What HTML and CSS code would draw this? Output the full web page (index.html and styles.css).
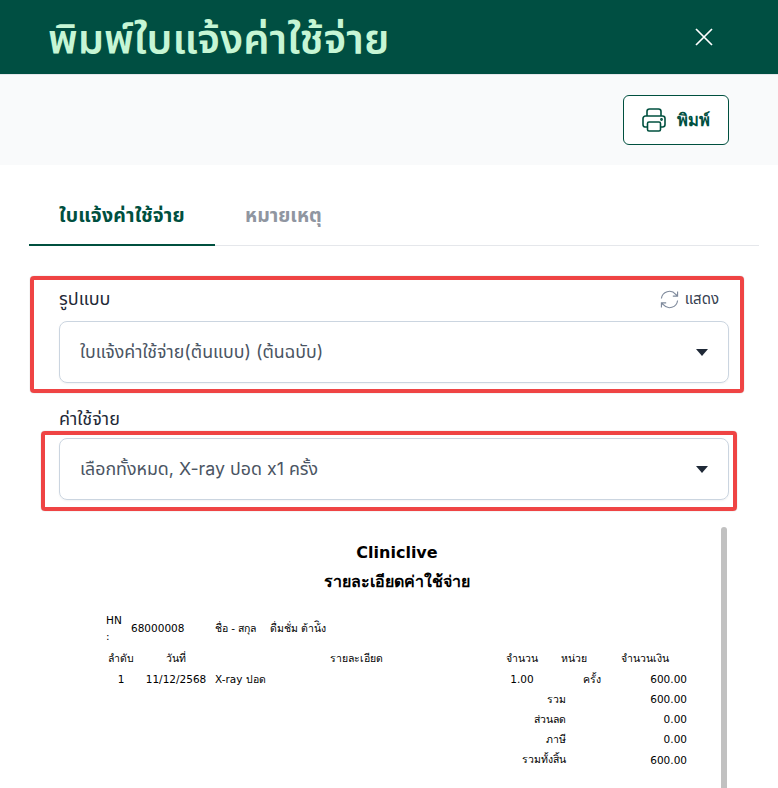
FILE: index.html
```html
<!DOCTYPE html>
<html lang="th">
<head>
<meta charset="utf-8">
<title>พิมพ์ใบแจ้งค่าใช้จ่าย</title>
<link rel="stylesheet" href="styles.css">
</head>
<body>
<header class="header">
  <h1 class="title">พิมพ์ใบแจ้งค่าใช้จ่าย</h1>
  <button class="close" aria-label="close">
    <svg width="20" height="20" viewBox="0 0 20 20"><path d="M2 2L18 18M18 2L2 18" stroke="#fff" stroke-width="1.7" fill="none"/></svg>
  </button>
</header>
<div class="toolbar">
  <button class="print">
    <svg width="26" height="26" viewBox="0 0 26 26" fill="none" stroke="#00503f" stroke-width="1.6"><path d="M6 9V4.500A2.500 2.500 0 0 1 8.500 2h9A2.500 2.500 0 0 1 20 4.500V9"/><path d="M6.500 20H4a2.500 2.500 0 0 1-2-2.500v-6A2.500 2.500 0 0 1 4.500 9h17A2.500 2.500 0 0 1 24 11.500v6a2.500 2.500 0 0 1-2.500 2.500H19.500"/><rect x="6.500" y="15" width="13" height="9" rx="1.500"/><circle cx="20.500" cy="12.500" r=".6"/></svg>
    <span>พิมพ์</span>
  </button>
</div>
<main class="content">
  <nav class="tabs">
    <div class="tab active">ใบแจ้งค่าใช้จ่าย</div>
    <div class="tab">หมายเหตุ</div>
  </nav>
  <section class="field first">
    <div class="label-row">
      <label class="label">รูปแบบ</label>
      <span class="show">
        <svg width="19" height="19" viewBox="0 0 20 20" fill="none" stroke="#7f8a9c" stroke-width="1.200"><path d="M1.500 9A8.500 8.500 0 0 1 16.500 4.500L18.500 6.500M18.500 1.500V6.500H13.500"/><path d="M18.500 11A8.500 8.500 0 0 1 3.500 15.500L1.500 13.500M1.500 18.500V13.500H6.500"/></svg>
        แสดง
      </span>
    </div>
    <div class="select"><span>ใบแจ้งค่าใช้จ่าย(ต้นแบบ) (ต้นฉบับ)</span><i class="caret"></i></div>
  </section>
  <section class="field second">
    <label class="label">ค่าใช้จ่าย</label>
    <div class="select"><span>เลือกทั้งหมด, X-ray ปอด x1 ครั้ง</span><i class="caret"></i></div>
  </section>
  <div class="report">
    <div class="doc">
      <div class="clinic">Cliniclive</div>
      <div class="doc-title">รายละเอียดค่าใช้จ่าย</div>
      <div class="patient">
        <span class="hn">HN :</span>
        <span class="hn-val">68000008</span>
        <span class="name-l">ชื่อ - สกุล</span>
        <span>ดื่มชั่ม ต้าน้ิง</span>
      </div>
      <table class="items">
        <colgroup><col class="c1"><col class="c2"><col class="c3"><col class="c4"><col class="c5"><col class="c6"></colgroup>
        <tr class="head"><th>ลำดับ</th><th>วันที่</th><th>รายละเอียด</th><th>จำนวน</th><th>หน่วย</th><th>จำนวนเงิน</th></tr>
        <tr><td class="ctr">1</td><td class="ctr">11/12/2568</td><td>X-ray ปอด</td><td class="ctr">1.00</td><td class="rt">ครั้ง</td><td class="rt">600.00</td></tr>
        <tr><td colspan="5" class="sum">รวม</td><td class="rt">600.00</td></tr>
        <tr><td colspan="5" class="sum">ส่วนลด</td><td class="rt">0.00</td></tr>
        <tr><td colspan="5" class="sum">ภาษี</td><td class="rt">0.00</td></tr>
        <tr class="grand"><td colspan="5" class="sum">รวมทั้งสิ้น</td><td class="rt">600.00</td></tr>
      </table>
    </div>
    <div class="scrollbar"></div>
  </div>
  <div class="annot a1"></div>
  <div class="annot a2"></div>
</main>
</body>
</html>
```
FILE: styles.css
```css
* { box-sizing: border-box; }
html, body { margin: 0; height: 788px; overflow: hidden; background: #fff; }
body { font-family: Inter, "Noto Sans Thai", "Noto Sans", "Liberation Sans", sans-serif; color: #1f2937; position: relative; }
.header { height: 74px; background: #004f42; display: flex; align-items: center; justify-content: space-between; padding: 0 64px 0 48px; }
.title { margin: 6px 0 0; font-size: 41.500px; font-weight: 600; color: #c6f6d5; line-height: 1; }
.close { background: none; border: 0; padding: 0; display: flex; }
.toolbar { height: 91px; background: #f9fafb; border-top: 1px solid #e5e7eb; display: flex; justify-content: flex-end; padding: 20px 49px 0 0; }
.print { width: 106px; height: 50px; border: 1px solid #00503f; border-radius: 6px; background: #fff; display: flex; align-items: center; justify-content: center; gap: 10px; font: 700 16.500px Inter, sans-serif; color: #00503f; padding: 0 2px 0 0; }
.content { position: relative; padding: 0 19px 0 29px; }
.tabs { display: flex; height: 81px; border-bottom: 1px solid #e5e7eb; }
.tab { padding: 38px 30px 0; font-size: 19.500px; line-height: 24px; font-weight: 700; color: #9096a1; height: 81px; }
.tab.active { color: #00503f; border-bottom: 2px solid #00503f; width: 186px; white-space: nowrap; letter-spacing: .2px; }
.field { padding: 0 30px; }
.field.first { margin-top: 38px; }
.field.second { margin-top: 21px; }
.label-row { display: flex; justify-content: space-between; align-items: center; }
.label { display: block; font-size: 18px; height: 30px; line-height: 30px; }
.second .label { margin-bottom: 4px; }
.show { display: flex; align-items: center; gap: 6px; font-size: 15px; color: #374151; margin-right: 10px; }
.select { height: 62px; border: 1px solid #cbd5e0; border-radius: 8px; display: flex; align-items: center; justify-content: space-between; padding: 0 20px; font-size: 17.800px; color: #4b5563; box-shadow: 0 1px 2px rgba(0,0,0,.05); }
.first .label-row { margin-bottom: 7px; height: 30px; }
.caret { width: 0; height: 0; border-left: 6.500px solid transparent; border-right: 6.500px solid transparent; border-top: 7px solid #1f2937; }
.report { position: absolute; left: 29px; top: 362px; width: 700px; height: 261px; overflow: hidden; }
.doc { font-family: "DejaVu Sans", Tahoma, sans-serif; font-size: 10.500px; color: #000; padding-top: 16px; }
.clinic { width: 736px; text-align: center; font-size: 16px; line-height: 20px; font-weight: 700; }
.doc-title { width: 736px; text-align: center; font-size: 16px; line-height: 20px; font-weight: 700; margin-top: 9px; }
.patient { display: flex; margin: 20px 0 0 77px; align-items: center; line-height: 16px; }
.hn { width: 16px; margin-right: 9px; }
.hn-val { width: 84px; }
.name-l { width: 55px; }
.items { margin: 4px 0 0 75px; border-collapse: collapse; table-layout: fixed; width: 584px; }
.items th, .items td { height: 20px; padding: 0 1px; font-weight: 400; text-align: left; white-space: nowrap; }
.items th { text-align: center; }
.items .head th { height: 21px; }
.items .grand td { height: 21px; }
.ctr { text-align: center !important; }
.rt { text-align: right !important; }
.items .sum { text-align: right; padding-right: 36px; }
.c1 { width: 34px; } .c2 { width: 76px; } .c3 { width: 284px; } .c4 { width: 48px; } .c5 { width: 56px; } .c6 { width: 86px; }
.scrollbar { position: absolute; left: 692px; top: 0; width: 6px; height: 261px; background: #c1c1c1; border-radius: 3px 3px 0 0; }
.annot { position: absolute; border: 4px solid #ef4444; border-radius: 4px; pointer-events: none; box-shadow: 0 0 1px rgba(0,0,0,.4); }
.a1 { left: 30px; top: 111px; width: 714px; height: 117px; }
.a2 { left: 41px; top: 266px; width: 696px; height: 80px; }
```
